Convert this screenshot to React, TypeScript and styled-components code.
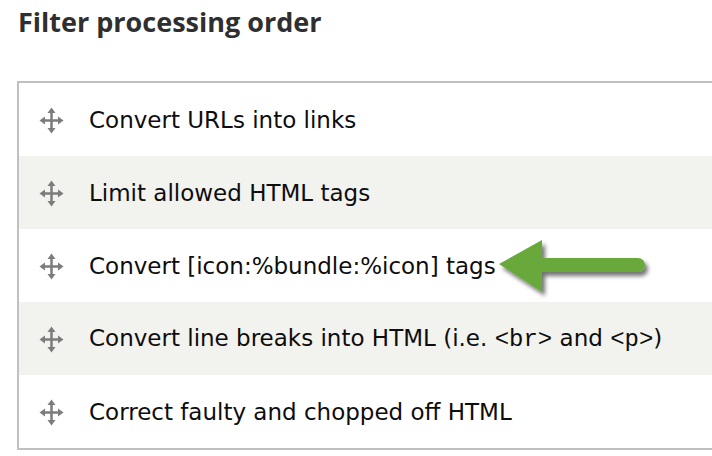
import React from "react";
import styled, { createGlobalStyle } from "styled-components";

const GlobalStyle = createGlobalStyle`
  html, body { margin: 0; padding: 0; background: #ffffff; }
  body { overflow: hidden; }
`;

const Page = styled.div`
  position: relative;
  width: 712px;
  height: 456px;
  overflow: hidden;
  background: #ffffff;
`;

const Heading = styled.h2`
  margin: 3px 0 0 18px;
  font-family: "Open Sans", sans-serif;
  font-size: 27px;
  font-weight: 700;
  line-height: 37px;
  color: #2f2f2f;
`;

const Table = styled.div`
  margin: 41px 0 0 17px;
  width: 740px;
  border: 2px solid #c0c0c0;
  display: flex;
  flex-direction: column;
`;

const Row = styled.div<{ $alt?: boolean }>`
  height: 73px;
  display: flex;
  align-items: center;
  gap: 25px;
  padding-left: 20px;
  background: ${(p) => (p.$alt ? "#f2f2ee" : "#ffffff")};
`;

const Handle = styled.svg`
  width: 25px;
  height: 27px;
  flex: none;
  margin-top: 2px;
`;

const Label = styled.span`
  font-family: "DejaVu Sans", sans-serif;
  font-size: 23px;
  color: #0d0d0d;
  white-space: nowrap;
`;

const Code = styled.code`
  font-family: "Liberation Mono", "Courier New", monospace;
  font-size: 24px;
`;

const Arrow = styled.svg`
  position: absolute;
  left: 492px;
  top: 232px;
  width: 170px;
  height: 75px;
  overflow: visible;
`;

const DragHandle = () => (
  <Handle viewBox="0 0 25 27">
    <g fill="#7c7c7c">
      <rect x="11.25" y="4" width="2.5" height="19" />
      <rect x="3" y="12.25" width="19" height="2.5" />
      <polygon points="12.5,0.5 8.5,6 16.5,6" />
      <polygon points="12.5,26.5 8.5,21 16.5,21" />
      <polygon points="0.5,13.5 6,9.5 6,17.5" />
      <polygon points="24.5,13.5 19,9.5 19,17.5" />
    </g>
  </Handle>
);

const items: React.ReactNode[] = [
  "Convert URLs into links",
  "Limit allowed HTML tags",
  "Convert [icon:%bundle:%icon] tags",
  <>
    Convert line breaks into HTML (i.e. <Code>&lt;br&gt;</Code> and{" "}
    <Code>&lt;p&gt;</Code>)
  </>,
  "Correct faulty and chopped off HTML",
];

export default function App() {
  return (
    <Page>
      <GlobalStyle />
      <Heading>Filter processing order</Heading>
      <Table>
        {items.map((item, i) => (
          <Row key={i} $alt={i % 2 === 1}>
            <DragHandle />
            <Label>{item}</Label>
          </Row>
        ))}
      </Table>
      <Arrow viewBox="0 0 170 75">
        <defs>
          <filter id="shadow" x="-20%" y="-30%" width="150%" height="170%">
            <feDropShadow dx="3" dy="4" stdDeviation="2" floodColor="#000" floodOpacity="0.55" />
          </filter>
        </defs>
        <path
          d="M7 32 L50 8 L50 26 L146 26 A7 7 0 0 1 146 40 L50 40 L50 60 Z"
          fill="#69a83a"
          filter="url(#shadow)"
        />
      </Arrow>
    </Page>
  );
}
